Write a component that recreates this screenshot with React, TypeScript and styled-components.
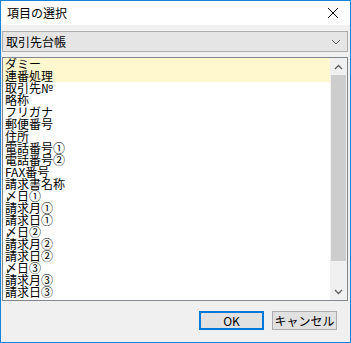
import styled, { createGlobalStyle } from "styled-components";

const GlobalStyle = createGlobalStyle`
  html, body {
    margin: 0;
    padding: 0;
    background: #ffffff;
  }
  body {
    font-family: "Noto Sans CJK JP", "Noto Sans", sans-serif;
    font-size: 12px;
    color: #000000;
  }
`;

const items = [
  "ダミー",
  "連番処理",
  "取引先№",
  "略称",
  "フリガナ",
  "郵便番号",
  "住所",
  "電話番号①",
  "電話番号②",
  "FAX番号",
  "請求書名称",
  "〆日①",
  "請求月①",
  "請求日①",
  "〆日②",
  "請求月②",
  "請求日②",
  "〆日③",
  "請求月③",
  "請求日③",
];

const Window = styled.div`
  width: 351px;
  height: 343px;
  box-sizing: border-box;
  border: 1px solid #1883d7;
  background: #f0f0f0;
  display: flex;
  flex-direction: column;
`;

const TitleBar = styled.div`
  height: 24px;
  background: #ffffff;
  display: flex;
  align-items: center;
  justify-content: space-between;
  padding-left: 6px;
  flex-shrink: 0;
`;

const TitleText = styled.span`
  font-size: 12px;
  line-height: 14px;
`;

const CloseButton = styled.div`
  width: 30px;
  height: 24px;
  display: flex;
  align-items: center;
  justify-content: center;
  margin-right: 2px;
`;

const Body = styled.div`
  flex: 1;
  display: flex;
  flex-direction: column;
  padding: 6px 2px 0 1px;
`;

const Combo = styled.div`
  height: 21px;
  box-sizing: border-box;
  border: 1px solid #adadad;
  background: #e5e5e5;
  display: flex;
  align-items: center;
  justify-content: space-between;
  padding: 0 6px 0 3px;
`;

const ComboText = styled.span`
  font-size: 12px;
  line-height: 14px;
`;

const ListBox = styled.div`
  margin-top: 5px;
  height: 244px;
  box-sizing: border-box;
  border: 1px solid #828790;
  background: #ffffff;
  display: flex;
`;

const Items = styled.div`
  flex: 1;
  overflow: hidden;
`;

const Row = styled.div<{ $selected?: boolean }>`
  height: 12px;
  line-height: 12px;
  font-size: 12px;
  padding-left: 2px;
  white-space: nowrap;
  background: ${(p) => (p.$selected ? "#fff8cf" : "transparent")};
`;

const ScrollBar = styled.div`
  width: 17px;
  background: #f0f0f0;
  display: flex;
  flex-direction: column;
`;

const ArrowBox = styled.div`
  height: 17px;
  display: flex;
  align-items: center;
  justify-content: center;
  flex-shrink: 0;
`;

const Track = styled.div`
  flex: 1;
  display: flex;
  flex-direction: column;
`;

const Thumb = styled.div`
  height: 186px;
  background: #cdcdcd;
  margin: 0 1px;
`;

const Footer = styled.div`
  display: flex;
  justify-content: flex-end;
  gap: 8px;
  padding: 10px 11px 0 0;
`;

const Button = styled.div<{ $default?: boolean }>`
  width: 65px;
  height: 19px;
  box-sizing: border-box;
  border: ${(p) => (p.$default ? "2px solid #0078d7" : "1px solid #adadad")};
  background: #e1e1e1;
  display: flex;
  align-items: center;
  justify-content: center;
  font-size: 12px;
`;

const Chevron = ({ up }: { up?: boolean }) => (
  <svg width="9" height="6" viewBox="0 0 9 6">
    <polyline
      points={up ? "1,5 4.5,1.5 8,5" : "1,1 4.5,4.5 8,1"}
      fill="none"
      stroke="#606060"
      strokeWidth="1.4"
    />
  </svg>
);

export default function App() {
  return (
    <>
      <GlobalStyle />
      <Window>
        <TitleBar>
          <TitleText>項目の選択</TitleText>
          <CloseButton>
            <svg width="12" height="12" viewBox="0 0 12 12">
              <path d="M1 1 L11 11 M11 1 L1 11" stroke="#000" strokeWidth="1" />
            </svg>
          </CloseButton>
        </TitleBar>
        <Body>
          <Combo>
            <ComboText>取引先台帳</ComboText>
            <svg width="10" height="6" viewBox="0 0 10 6">
              <polyline points="1,1 5,5 9,1" fill="none" stroke="#606060" strokeWidth="1" />
            </svg>
          </Combo>
          <ListBox>
            <Items>
              {items.map((item, i) => (
                <Row key={item} $selected={i < 2}>
                  {item}
                </Row>
              ))}
            </Items>
            <ScrollBar>
              <ArrowBox>
                <Chevron up />
              </ArrowBox>
              <Track>
                <Thumb />
              </Track>
              <ArrowBox>
                <Chevron />
              </ArrowBox>
            </ScrollBar>
          </ListBox>
          <Footer>
            <Button $default>OK</Button>
            <Button>キャンセル</Button>
          </Footer>
        </Body>
      </Window>
    </>
  );
}
